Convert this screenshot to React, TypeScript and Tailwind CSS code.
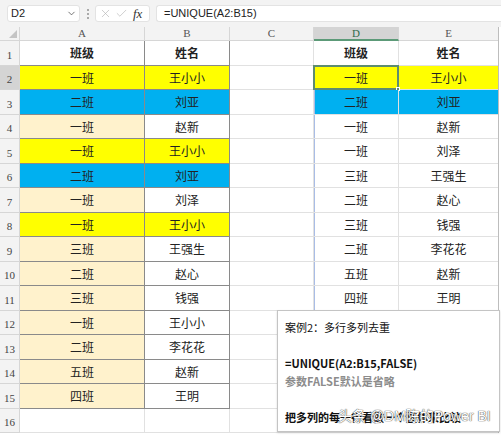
import React from "react";
import { ChevronDown, X, Check } from "lucide-react";

type Row = { a: string; b: string; ab: string; bb: string; d?: string; e?: string; db?: string };

const Y = "bg-[#ffff00]";
const BL = "bg-[#00b0f0]";
const CR = "bg-[#fff2cc]";
const W = "bg-white";

const rows: Row[] = [
  { a: "班级", b: "姓名", ab: W, bb: W, d: "班级", e: "姓名", db: W },
  { a: "一班", b: "王小小", ab: Y, bb: Y, d: "一班", e: "王小小", db: Y },
  { a: "二班", b: "刘亚", ab: BL, bb: BL, d: "二班", e: "刘亚", db: BL },
  { a: "一班", b: "赵新", ab: CR, bb: W, d: "一班", e: "赵新", db: W },
  { a: "一班", b: "王小小", ab: Y, bb: Y, d: "一班", e: "刘泽", db: W },
  { a: "二班", b: "刘亚", ab: BL, bb: BL, d: "三班", e: "王强生", db: W },
  { a: "一班", b: "刘泽", ab: CR, bb: W, d: "二班", e: "赵心", db: W },
  { a: "一班", b: "王小小", ab: Y, bb: Y, d: "三班", e: "钱强", db: W },
  { a: "三班", b: "王强生", ab: CR, bb: W, d: "二班", e: "李花花", db: W },
  { a: "二班", b: "赵心", ab: CR, bb: W, d: "五班", e: "赵新", db: W },
  { a: "三班", b: "钱强", ab: CR, bb: W, d: "四班", e: "王明", db: W },
  { a: "一班", b: "王小小", ab: CR, bb: W },
  { a: "二班", b: "李花花", ab: CR, bb: W },
  { a: "五班", b: "赵新", ab: CR, bb: W },
  { a: "四班", b: "王明", ab: CR, bb: W },
  { a: "", b: "", ab: W, bb: W },
];

const cjk = { fontFamily: '"Noto Sans CJK SC", "Noto Sans", sans-serif' };
const serif = { fontFamily: '"Liberation Serif", "DejaVu Serif", serif' };

export default function App() {
  return (
    <div className="relative w-[501px] h-[436px] overflow-hidden bg-white" style={cjk}>
      {/* formula bar */}
      <div className="h-[27px] bg-[#f3f3f3] flex items-start pt-[5px] pl-[7px] gap-[6px]">
        <div className="w-[73px] h-[17px] bg-white rounded-[3px] border border-[#e3e3e3] flex items-center justify-between pl-[3px] pr-[2px] text-[11px] text-[#222]" style={{ fontFamily: '"Liberation Sans", sans-serif' }}>
          <span>D2</span>
          <ChevronDown size={11} strokeWidth={1.6} className="text-[#444]" />
        </div>
        <div className="w-[3px] h-[17px] flex flex-col items-center justify-center gap-[2px]">
          <div className="w-[2px] h-[2px] bg-[#aaa]" />
          <div className="w-[2px] h-[2px] bg-[#aaa]" />
          <div className="w-[2px] h-[2px] bg-[#aaa]" />
        </div>
        <div className="w-[55px] h-[17px] bg-white rounded-[3px] border border-[#e3e3e3] flex items-center px-[3px] gap-[3px]">
          <X size={13} strokeWidth={1.2} className="text-[#b5b5b5]" />
          <Check size={13} strokeWidth={1.2} className="text-[#b5b5b5]" />
          <span className="text-[13px] italic text-[#333] leading-none ml-[2px]" style={serif}>fx</span>
        </div>
        <div className="flex-1 h-[17px] bg-white rounded-l-[3px] border border-[#e3e3e3] border-r-0 flex items-center pl-[7px] text-[11px] text-[#222]" style={{ fontFamily: '"Liberation Sans", sans-serif' }}>
          =UNIQUE(A2:B15)
        </div>
      </div>

      {/* sheet */}
      <div className="w-[499px] border-r border-[#bdbdbd]">
        {/* column headers */}
        <div className="flex h-[14px] bg-[#f3f3f3] text-[11px] text-[#555]" style={serif}>
          <div className="w-[20px] border-r border-b border-[#d6d6d6] relative">
            <div className="absolute right-[2px] bottom-[2px] w-0 h-0 border-l-[8px] border-l-transparent border-b-[8px] border-b-[#c4c4c4]" />
          </div>
          <div className="w-[125px] border-r border-b border-[#d6d6d6] flex items-center justify-center">A</div>
          <div className="w-[85px] border-r border-b border-[#d6d6d6] flex items-center justify-center">B</div>
          <div className="w-[84px] border-r border-b border-[#d6d6d6] flex items-center justify-center">C</div>
          <div className="w-[85px] border-r border-[#d6d6d6] border-b-2 border-b-[#5c9a78] bg-[#d4d4d4] flex items-center justify-center text-[#2f6b4b]">D</div>
          <div className="w-[99px] border-b border-[#d6d6d6] flex items-center justify-center">E</div>
        </div>

        {rows.map((r, i) => {
          const h = i % 2 === 0 ? "h-[25px]" : "h-[24px]";
          const inTable = i < 15;
          const bold = i === 0 ? "font-bold" : "";
          const dRow = i < 11;
          const selected = i === 1;
          return (
            <div key={i} className={`flex ${h} text-[12px] text-[#222]`}>
              <div
                className={`w-[20px] shrink-0 border-r border-b border-[#d6d6d6] flex items-end justify-center pb-[2px] text-[11px] text-[#444] ${selected ? "bg-[#d4d4d4]" : "bg-[#f3f3f3]"}`}
                style={serif}
              >
                {i + 1}
              </div>
              <div
                className={`w-[125px] shrink-0 border-r border-b flex items-center justify-center ${r.ab} ${bold} ${inTable ? "border-[#8a8a8a]" : "border-[#e1e1e1]"}`}
              >
                {r.a}
              </div>
              <div
                className={`w-[85px] shrink-0 border-r border-b flex items-center justify-center ${r.bb} ${bold} ${inTable ? "border-[#8a8a8a]" : "border-[#e1e1e1]"}`}
              >
                {r.b}
              </div>
              <div className="w-[84px] shrink-0 border-r border-b border-[#e1e1e1]" />
              <div
                className={`relative w-[85px] shrink-0 border-r border-b border-[#e1e1e1] flex items-center justify-center ${r.db ?? ""} ${bold} ${dRow && i > 0 ? "shadow-[inset_1px_0_0_#a9bde6]" : ""}`}
              >
                {r.d}
                {selected && (
                  <div className="absolute -left-[1px] -top-[1px] -right-[1px] -bottom-[1px] border-2 border-[#5e8c70]">
                    <div className="absolute -right-[3px] -bottom-[3px] w-[4px] h-[4px] bg-[#5e8c70] border border-white" />
                  </div>
                )}
              </div>
              <div className={`w-[99px] shrink-0 border-b border-[#e1e1e1] flex items-center justify-center ${r.db ?? ""} ${bold}`}>
                {r.e}
              </div>
            </div>
          );
        })}
      </div>

      {/* text box */}
      <div className="absolute left-[277px] top-[310px] w-[223px] h-[122px] bg-white border border-[#c4c4c4] shadow-[0_1px_2px_rgba(0,0,0,0.15)] px-[7px] pt-[7px] text-[11px] leading-[18px] text-[#111]">
        <div>案例2：多行多列去重</div>
        <div className="h-[18px]" />
        <div className="font-bold">=UNIQUE(A2:B15,FALSE)</div>
        <div className="font-bold text-[#8c8c8c]">参数FALSE默认是省略</div>
        <div className="h-[18px]" />
        <div className="font-bold">把多列的每一行看做一个整体来比较</div>
      </div>

      {/* watermark */}
      <div
        className="absolute left-[338px] top-[406px] text-[14px] text-white whitespace-nowrap [text-shadow:0_0_1px_#444,0_0_1px_#444]"
        style={{ fontFamily: '"Liberation Sans", "Noto Sans CJK SC", sans-serif' }}
      >
        头条 @DM陈的Power BI
      </div>
    </div>
  );
}
